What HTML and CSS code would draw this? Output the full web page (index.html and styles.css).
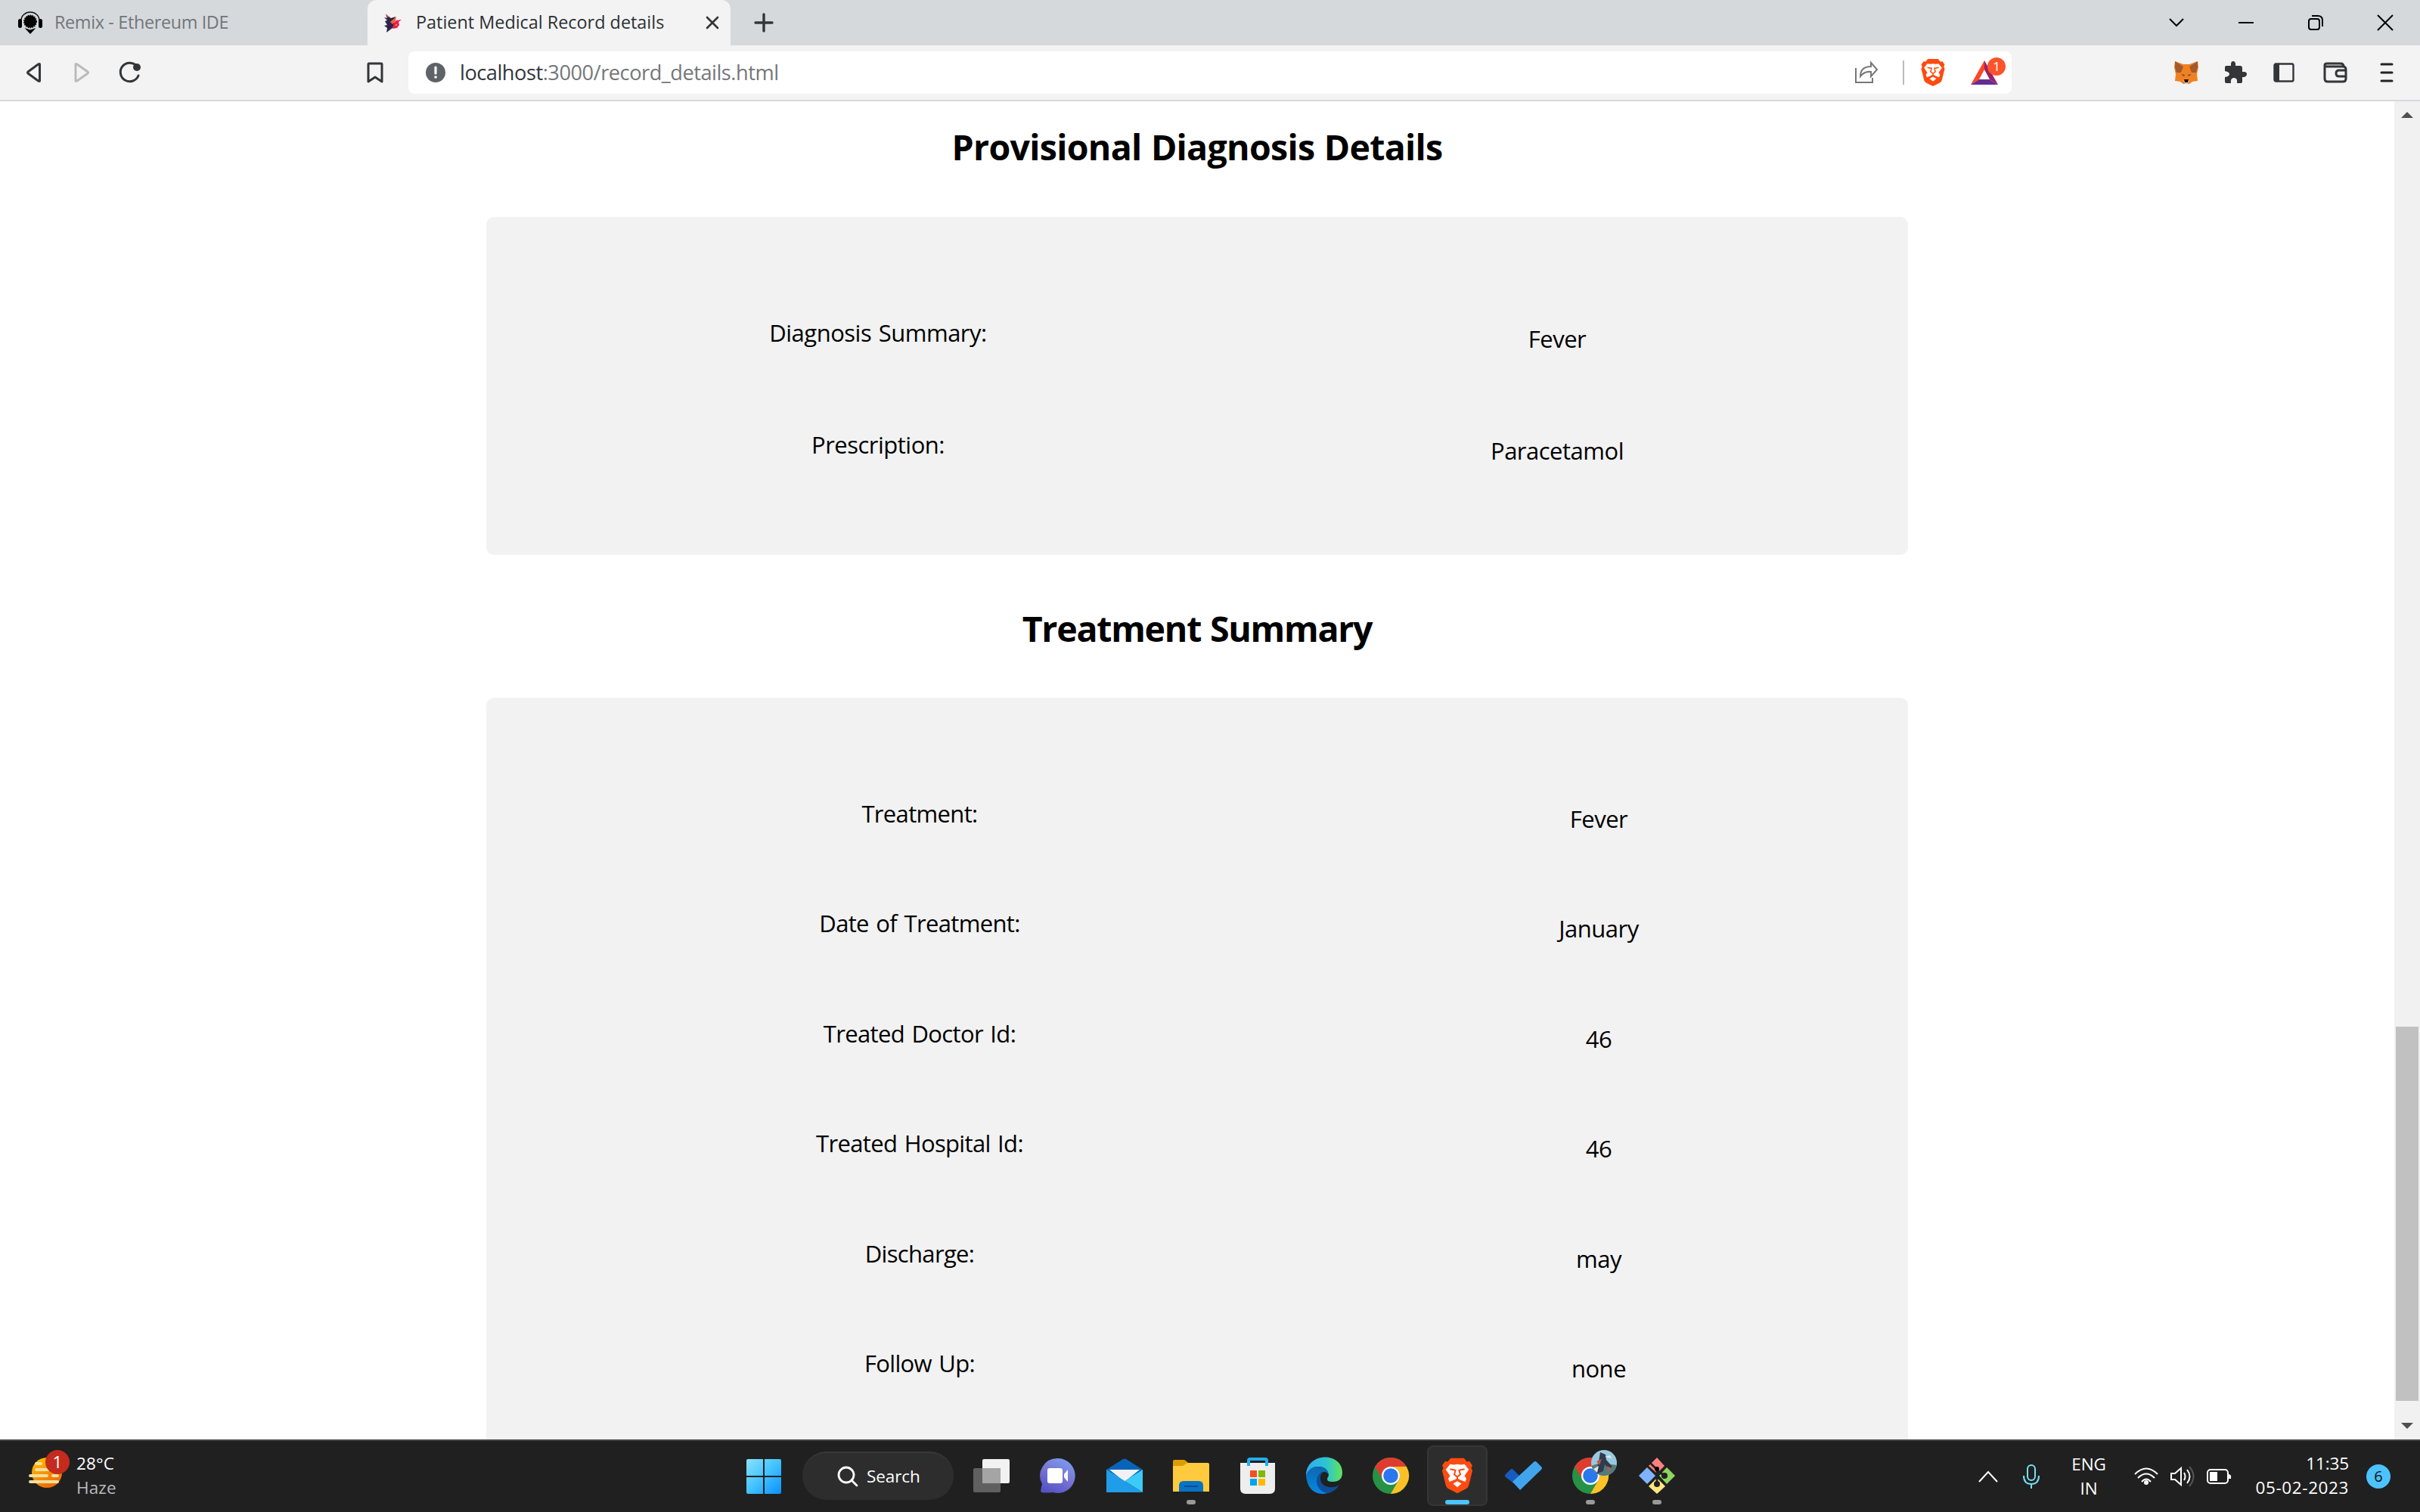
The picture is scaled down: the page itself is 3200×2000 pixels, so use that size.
FILE: index.html
```html
<!DOCTYPE html>
<html lang="en">
<head>
<meta charset="utf-8">
<title>Patient Medical Record details</title>
<link rel="stylesheet" href="styles.css">
</head>
<body>
<div class="screen">
  <header class="tabs">
    <div class="tab tab-idle">
      <svg class="remix" width="32" height="29" viewBox="0 0 32 29"><path d="M4 11a12 11 0 0 1 24 0" fill="none" stroke="#111" stroke-width="1.500"/><circle cx="16" cy="12.500" r="8.200" fill="#050505"/><circle cx="16" cy="12.500" r="8.400" fill="none" stroke="#050505" stroke-width="1.200" stroke-dasharray="1.500 1.500"/><rect y="9" width="5" height="12" rx="2.500"/><rect x="27" y="9" width="5" height="12" rx="2.500"/><path d="M8.500 21l7.500 2.500L23.500 21 16 29z"/></svg>
      <span class="tab-title">Remix - Ethereum IDE</span>
    </div>
    <div class="tab tab-active">
      <svg class="bird" width="25" height="25" viewBox="0 0 25 25"><path d="M3 1l7 5 6-2-3 6 3 5-4 4-8 6 1-6-4-3 4-1-3-5 3-1-4-4 4 1z" fill="#2d2548"/><path d="M3 0l6 5-4-1z" fill="#de735c"/><path d="M9 11l8-7-1 6-4 4z" fill="#e8683f"/><path d="M14 12l3-3 7-1-4 3 1 4-3 4-6 1 1-4z" fill="#f01f45"/><circle cx="17" cy="15" r="1" fill="#ff9fb0"/></svg>
      <span class="tab-title">Patient Medical Record details</span>
      <svg class="tab-close" width="18" height="18" viewBox="0 0 18 18"><path d="M2 2l14 14M16 2L2 16" stroke="#333" stroke-width="2.6" stroke-linecap="round"/></svg>
    </div>
    <svg class="tab-new" width="26" height="26" viewBox="0 0 26 26"><path d="M13 2v22M2 13h22" stroke="#333639" stroke-width="3.4" stroke-linecap="round"/></svg>
    <div class="window-buttons">
      <svg width="24" height="24" viewBox="0 0 24 24"><path d="M3 7l9 9 9-9"/></svg>
      <svg width="24" height="24" viewBox="0 0 24 24"><path d="M2 12h20"/></svg>
      <svg width="24" height="24" viewBox="0 0 24 24"><rect x="3" y="7" width="14" height="14" rx="3"/><path d="M7 3h8q6 0 6 6v8"/></svg>
      <svg width="24" height="24" viewBox="0 0 24 24"><path d="M2 2l20 20M22 2L2 22"/></svg>
    </div>
  </header>

  <nav class="toolbar">
    <svg class="nav-back" width="24" height="28" viewBox="0 0 24 28"><path d="M19.500 3v22q0 1-2 0L4 15q-1-1 0-2L17.500 3q2-1 2 0z"/></svg>
    <svg class="nav-forward" width="24" height="28" viewBox="0 0 24 28"><path d="M4 3v22q0 1 2 0l14-10q1-1 0-2L6 3Q4 2 4 3z"/></svg>
    <svg class="nav-reload" width="30" height="30" viewBox="0 0 30 30"><path d="M26 19A12.300 12.300 0 1 1 23 5.500" fill="none" stroke="#333639" stroke-width="3" stroke-linecap="round"/><circle cx="24" cy="8" r="5" fill="#333639"/></svg>
    <svg class="nav-bookmark" width="24" height="30" viewBox="0 0 24 30"><path d="M3 4q0-1 1-1h16q1 0 1 1v23l-9-6-9 6z" fill="none" stroke="#333639" stroke-width="3" stroke-linejoin="round"/></svg>
    <div class="address">
      <svg class="site-info" width="26" height="26" viewBox="0 0 26 26"><circle cx="13" cy="13" r="13" fill="#5f6368"/><path d="M13 6v8" stroke="#fff" stroke-width="3.200" stroke-linecap="round"/><circle cx="13" cy="19" r="1.800" fill="#fff"/></svg>
      <span class="url"><span class="host">localhost</span>:3000/record_details.html</span>
      <div class="address-actions">
        <svg width="32" height="30" viewBox="0 0 32 30"><path d="M2 9v19h22v-6M8 20q0-13 14-13V2l8 9-8 9v-6q-9-1-14 6z" fill="none" stroke="#777" stroke-width="2"/></svg>
        <i class="divider"></i>
        <svg class="brave-small" width="32" height="36" viewBox="0 0 50 58"><use href="#lion"/></svg>
        <div class="bat">
          <svg width="36" height="32" viewBox="0 0 36 32"><path d="M18 0L0 32l11-7 7-13z" fill="#ff4724"/><path d="M18 0l18 32-11-7-7-13z" fill="#9e1f63"/><path d="M0 32h36l-11-7H11z" fill="#662d91"/></svg>
          <b class="bat-count">1</b>
        </div>
      </div>
    </div>
    <div class="extensions">
      <svg class="ext-fox" width="32" height="30" viewBox="0 0 32 30"><path d="M1 0l11 4h8l11-4 1 8-2 9 1 9-7 1-4 3h-8l-4-3-7-1 1-9-2-9z" fill="#f08122"/><path d="M1 0l11 7-3 8H3L1 8zM31 0L20 7l3 8h6l2-7z" fill="#a3592b"/><path d="M9 17l5 1-1 2zM23 17l-5 1 1 2z" fill="#5c4a3a"/><path d="M12 25h8l-2 5h-4z" fill="#d8c4b5"/><path d="M13 24h6l-1 4h-4z" fill="#16100c"/></svg>
      <svg class="ext-puzzle" width="30" height="30" viewBox="0 0 30 30"><path d="M1 8q0-2 2-2h6V4q0-4 3-4t3 4v2h6q3 0 3 3v5h2q4 0 4 3t-4 4h-2v6q0 2-2 2h-5q1-7-4-7t-4 7H3q-2 0-2-2v-6q6-1 6-4t-6-4z" fill="#333639"/></svg>
      <svg class="ext-sidebar" width="28" height="26" viewBox="0 0 28 26"><rect x="1.500" y="1.500" width="25" height="23" rx="2" fill="none" stroke="#333639" stroke-width="2.400"/><path d="M1 2h7v22H1z" fill="#333639"/></svg>
      <svg class="ext-wallet" width="32" height="28" viewBox="0 0 32 28"><path d="M2 5v17q0 4 4 4h20q4 0 4-4V10q0-4-4-4H4Q2 6 2 4q0-2 3-2h18q4 0 4 4M30 11h-9q-4 0-4 4t4 4h9" fill="none" stroke="#333639" stroke-width="3"/></svg>
      <svg width="18" height="28" viewBox="0 0 18 28"><path d="M2 3h14M2 14h14M2 25h14" stroke="#222" stroke-width="3" stroke-linecap="round"/></svg>
    </div>
  </nav>

  <div class="viewport">
    <main class="page">
      <h2>Provisional Diagnosis Details</h2>
      <section class="card diagnosis">
        <div class="row"><label>Diagnosis Summary:</label><output>Fever</output></div>
        <div class="row"><label>Prescription:</label><output>Paracetamol</output></div>
      </section>
      <h2>Treatment Summary</h2>
      <section class="card treatment">
        <div class="row"><label>Treatment:</label><output>Fever</output></div>
        <div class="row"><label>Date of Treatment:</label><output>January</output></div>
        <div class="row"><label>Treated Doctor Id:</label><output>46</output></div>
        <div class="row"><label>Treated Hospital Id:</label><output>46</output></div>
        <div class="row"><label>Discharge:</label><output>may</output></div>
        <div class="row"><label>Follow Up:</label><output>none</output></div>
      </section>
    </main>
    <aside class="scrollbar">
      <svg width="16" height="8" viewBox="0 0 16 8"><path d="M0 8l8-8 8 8z" fill="#505050"/></svg>
      <i class="thumb"></i>
      <svg width="16" height="8" viewBox="0 0 16 8"><path d="M0 0l8 8 8-8z" fill="#505050"/></svg>
    </aside>
  </div>

  <footer class="taskbar">
    <div class="weather">
      <div class="weather-icon">
        <svg width="42" height="40" viewBox="0 0 42 40"><defs><linearGradient id="sun" x2="0.6" y2="1"><stop stop-color="#ffc800"/><stop offset="1" stop-color="#ef6a00"/></linearGradient></defs><circle cx="25" cy="20" r="20" fill="url(#sun)"/><path d="M11 8h6M11 16h16M3 24h22M33 24h6M3 32h36" stroke="#f5dda0" stroke-width="4" stroke-linecap="round"/></svg>
        <b class="weather-badge">1</b>
      </div>
      <div class="weather-text"><span>28°C</span><span class="dim">Haze</span></div>
    </div>

    <div class="apps">
      <div class="app"><svg width="46" height="46" viewBox="0 0 46 46"><defs><linearGradient id="win" gradientUnits="userSpaceOnUse" x1="0" y1="0" x2="46" y2="46"><stop stop-color="#8be3ff"/><stop offset=".5" stop-color="#42c2ff"/><stop offset="1" stop-color="#0a90ff"/></linearGradient></defs><path d="M2 0h20v22H0V2q0-2 2-2zM24 0h20q2 0 2 2v20H24zM0 24h22v22H2q-2 0-2-2zM24 24h22v20q0 2-2 2H24z" fill="url(#win)"/></svg></div>
      <div class="search"><svg width="28" height="28" viewBox="0 0 28 28"><circle cx="12" cy="12" r="10" fill="none" stroke="#fff" stroke-width="2.800"/><path d="M19 19l7 7" stroke="#fff" stroke-width="2.800" stroke-linecap="round"/></svg><span>Search</span></div>
      <div class="app"><svg width="48" height="44" viewBox="0 0 48 44"><rect x="12" width="36" height="32" rx="2" fill="#f2f2f2"/><rect y="12" width="36" height="32" rx="2" fill="#606060"/><path d="M12 12h24v20H12z" fill="#a5a5a5"/></svg></div>
      <div class="app"><svg width="46" height="46" viewBox="0 0 46 46"><defs><linearGradient id="chat" x1=".8" x2=".3" y2="1"><stop stop-color="#7c9df0"/><stop offset=".5" stop-color="#7876d2"/><stop offset="1" stop-color="#5553c5"/></linearGradient></defs><path d="M23 0a23 23 0 1 1-7 45Q8 46 1 45q-2-1 1-11A23 23 0 0 1 23 0z" fill="url(#chat)"/><rect x="9" y="13" width="20" height="20" rx="3" fill="#fff"/><path d="M31 21l5-6v16l-5-6z" fill="#fff"/></svg></div>
      <div class="app"><svg width="48" height="46" viewBox="0 0 48 46"><path d="M0 15L22 1q2-1 4 0l22 14-8 12H8z" fill="#0864b9"/><path d="M4 15h40L24 31z" fill="#f1f1f4"/><path d="M0 15l24 15L0 45z" fill="#24aaea"/><path d="M48 15L24 30l24 15z" fill="#3bcbf6"/><path d="M0 15l48 30H0z" fill="#1f9de8"/></svg></div>
      <div class="app running"><svg width="48" height="42" viewBox="0 0 48 42"><path d="M0 12V2q0-2 2-2h12q2 0 4 2l3 3h-1l-7 7z" fill="#dd9c00"/><path d="M0 8h13l6-4h27q2 0 2 2v36H0z" fill="#ffca3d"/><path d="M8 42V34q0-6 6-6h20q6 0 6 6v8z" fill="#0873c5"/><path d="M15 35h18" stroke="#074e91" stroke-width="2"/></svg></div>
      <div class="app"><svg width="46" height="48" viewBox="0 0 46 48"><path d="M0 7h46v34q0 7-7 7H7q-7 0-7-7z" fill="#eee"/><path d="M11 11V4q0-2 2-2h20q2 0 2 2v7" fill="none" stroke="#1fb0f0" stroke-width="4"/><path d="M13 17h9v9h-9z" fill="#f25022"/><path d="M24 17h9v9h-9z" fill="#7fba00"/><path d="M13 28h9v9h-9z" fill="#00a4ef"/><path d="M24 28h9v9h-9z" fill="#ffb900"/></svg></div>
      <div class="app"><svg width="48" height="48" viewBox="0 0 48 48"><defs><linearGradient id="edge" x2="1"><stop stop-color="#31aaf4"/><stop offset=".55" stop-color="#2cc4d2"/><stop offset="1" stop-color="#62e35a"/></linearGradient><linearGradient id="edgeb" x2="0" y2="1"><stop stop-color="#0b68b0"/><stop offset="1" stop-color="#0789e2"/></linearGradient></defs><path d="M0 24C0-8 48-8 48 20q0 12-13 12-7 0-7-3t2-5q-1-12-14-12Q5 12 0 24z" fill="url(#edge)"/><path d="M0 24Q4 12 15 12q13 0 15 11-3-5-8-4-5 2-4 10 3 13 18 12-4 7-14 7Q2 47 0 24z" fill="url(#edgeb)"/><path d="M20 19q-7 6-6 14 3 13 15 14 10-2 15-11-5 4-14 3-12-2-11-14 1-5 5-6z" fill="#0e4e98"/></svg></div>
      <div class="app"><svg width="48" height="48" viewBox="0 0 48 48"><g id="chrome"><circle cx="24" cy="24" r="24" fill="#269246"/><path d="M3.200 12A24 24 0 0 1 44.800 12H24a12 12 0 0 0-10 18z" fill="#df3c30"/><path d="M44.800 12A24 24 0 0 1 24 48l10.400-18A12 12 0 0 0 24 12z" fill="#fdc127"/><circle cx="24" cy="24" r="12" fill="#fff"/><circle cx="24" cy="24" r="9.800" fill="#2b78ed"/></g></svg></div>
      <div class="app selected"><svg width="40" height="48" viewBox="0 0 50 58"><g id="lion"><path d="M14 0h22l5 6 4-1 5 7-2 4 2 5-6 24q-1 4-5 6L25 58 11 51q-4-2-5-6L0 21l2-5-2-4 5-7 4 1z" fill="#ff4b10"/><path d="M13 10l6 1 6-1 6 1 6-1 7 9-7 10 3 5-2 5-8-3-5-3-5 3-8 3-2-5 3-5-7-10zM25 38l7 4-7 6-7-6z" fill="#fff"/><path d="M13 18l9 2-2 7 5 4 5-4-2-7 9-2M25 30v6" fill="none" stroke="#ff4b10" stroke-width="2.500"/></g></svg></div>
      <div class="app"><svg width="50" height="40" viewBox="0 0 50 40"><path d="M1 18l6-6q2-2 4 0l15 15-8 8L1 22q-2-2 0-4z" fill="#185abd"/><path d="M10 28L38 2q2-2 4 0l6 6q2 2 0 4L20 39z" fill="#41a5ee"/></svg></div>
      <div class="app running">
        <svg width="48" height="48" viewBox="0 0 48 48"><use href="#chrome"/></svg>
        <svg class="avatar" width="34" height="34" viewBox="0 0 34 34"><defs><clipPath id="face"><circle cx="17" cy="17" r="17"/></clipPath></defs><g clip-path="url(#face)"><path d="M0 0h34v34H0z" fill="#9ac9df"/><path d="M0 21l12-4 22 3v14H0z" fill="#547b7c"/><path d="M12 3l7 3 1 7 8 9-5 3-5-6-2 9-10 4 4-17z" fill="#303b51"/><path d="M7 15l7-3-3 8zM21 21l5 3-3 5z" fill="#bc5c3b"/><path d="M3 25l7-4-2 9zM18 9l7-2 2 4z" fill="#dfe9e8"/></g></svg>
      </div>
      <div class="app running"><svg width="48" height="48" viewBox="0 0 48 48"><path d="M24 0l10 11-10 10-11-10z" fill="#ff8080"/><path d="M37 13l11 11-11 11-10-11z" fill="#8ed660"/><path d="M11 13l11 11-11 11L0 24z" fill="#80b3ff"/><path d="M24 27l11 11-11 10-11-10z" fill="#ffe680"/><path d="M15 7l9 9v20M24 17l10 7" fill="none" stroke="#202020" stroke-width="2.800"/><circle cx="24" cy="15" r="3"/><circle cx="24" cy="35" r="4" fill="#202020"/><circle cx="34" cy="24" r="4" fill="#202020"/></svg></div>
    </div>

    <div class="tray">
      <svg class="tray-up" width="26" height="16" viewBox="0 0 26 16"><path d="M1 15L13 2l12 13"/></svg>
      <svg class="tray-mic" width="22" height="32" viewBox="0 0 22 32"><rect x="6" y="1" width="10" height="20" rx="5"/><path d="M1 15q0 11 10 11t10-11M11 26v6"/></svg>
      <div class="language"><span>ENG</span><span>IN</span></div>
      <svg class="tray-wifi" width="32" height="24" viewBox="0 0 32 24"><path d="M1 9Q16-6 31 9M5 14q11-11 22 0M10 19q6-7 12 0"/><circle cx="16" cy="20" r="3" fill="#fff" stroke="none"/></svg>
      <svg class="tray-sound" width="32" height="28" viewBox="0 0 32 28"><path d="M1 10v8h5l8 7V3l-8 7zM18 9q3 5 0 10M22 5q7 9 0 18"/><path d="M25 1q11 13 0 26" stroke="#555"/></svg>
      <svg class="tray-battery" width="32" height="22" viewBox="0 0 32 22"><rect x="1" y="2" width="27" height="18" rx="4"/><path d="M4 5h10v12H4zM29 8q4 0 3 6h-3z" fill="#fff" stroke="none"/></svg>
      <div class="clock"><span>11:35</span><span class="date">05-02-2023</span></div>
      <b class="notifications">6</b>
    </div>
  </footer>
</div>
</body>
</html>
```
FILE: styles.css
```css
* { box-sizing: border-box; }
body { margin: 0; overflow: hidden; font-family: "Open Sans", "Noto Sans", sans-serif; background: #fff; }
svg { display: block; flex: none; overflow: visible; }
.screen { width: 3200px; height: 2000px; display: flex; flex-direction: column; }

.tabs { height: 60px; flex: none; display: flex; align-items: center; background: #d5d9dc; }
.tab { height: 60px; display: flex; align-items: center; font-size: 23.4px; letter-spacing: -0.35px; white-space: nowrap; }
.tab-title { margin-top: -2px; }
.tab-idle { width: 486px; padding-left: 24px; gap: 16px; color: #72767a; }
.tab-active { width: 480px; padding: 0 15px 0 21px; gap: 18px; background: #f3f3f3; border-radius: 12px 12px 0 0; color: #2d3033; letter-spacing: 0; }
.tab-close { margin-left: auto; }
.tab-new { margin-left: 31px; }
.window-buttons { margin-left: auto; padding-right: 34px; display: flex; gap: 68px; fill: none; stroke: #000; stroke-width: 2; }

.toolbar { height: 74px; flex: none; display: flex; align-items: center; background: #f3f3f3; border-bottom: 2px solid #d5d9dc; }
.nav-back { margin-left: 33px; fill: none; stroke: #333639; stroke-width: 3; }
.nav-forward { margin-left: 39px; fill: none; stroke: #bbb; stroke-width: 3; }
.nav-reload { margin-left: 37px; }
.nav-bookmark { margin-left: 297px; }
.address { width: 2120px; height: 56px; margin-left: 32px; padding: 0 10px 0 23px; display: flex; align-items: center; background: #fff; border-radius: 8px; }
.url { margin: -2px 0 0 19px; font-size: 27.2px; letter-spacing: -0.47px; color: #74777a; }
.host { color: #333639; }
.address-actions { margin-left: auto; display: flex; align-items: center; }
.divider { width: 2px; height: 32px; margin: 0 22px 0 32px; background: #bbb; }
.bat { position: relative; margin: 0 8px 0 34px; }
.bat-count { position: absolute; left: 22px; top: -4px; width: 24px; height: 24px; border-radius: 50%; background: #fb542b; color: #fff; font: 17px/24px "Open Sans", sans-serif; text-align: center; }
.extensions { margin-left: auto; padding-right: 35px; display: flex; align-items: center; }
.ext-fox { margin-right: 34px; }
.ext-puzzle { margin-right: 35px; }
.ext-sidebar { margin-right: 38px; }
.ext-wallet { margin-right: 43px; }

.viewport { flex: 1; min-height: 0; display: flex; overflow: hidden; }
.page { flex: 1; display: flex; flex-direction: column; align-items: center; overflow: hidden; }
h2 { margin: 0; height: 153px; flex: none; padding-top: 28px; font-size: 46.500px; line-height: 64px; letter-spacing: -0.7px; word-spacing: 1px; }
h2 + .card + h2 { height: 189px; padding-top: 65px; letter-spacing: -1.25px; }
.card { width: 1880px; flex: none; background: #f2f2f2; border-radius: 10px; font-size: 31px; line-height: 44px; letter-spacing: -0.5px; word-spacing: 2px; color: #000; }
.diagnosis { height: 447px; padding: 131px 0 0 69px; }
.treatment { height: 1100px; padding: 131px 0 0 124px; }
.row { display: flex; text-align: center; height: 148px; }
.treatment .row { height: 145.400px; }
.row label, .row output { width: 898px; flex: none; }
.row output { padding-top: 8px; }
.treatment label { letter-spacing: -0.65px; }
.treatment output { padding-top: 7px; }
.scrollbar { width: 34px; display: flex; flex-direction: column; align-items: center; padding: 14px 2px 14px; background: #f1f1f1; }
.thumb { width: 30px; height: 495px; margin-top: auto; margin-bottom: 29px; background: #c1c1c1; }

.taskbar { height: 96px; flex: none; display: flex; background: #202020; border-top: 2px solid #444; color: #fff; font-size: 22.500px; line-height: 32px; letter-spacing: -0.1px; }
.weather { width: 984px; display: flex; padding: 14px 0 0 37px; }
.weather-icon { position: relative; width: 64px; padding-top: 8px; }
.weather-badge { position: absolute; left: 23px; top: -2px; width: 32px; height: 32px; border-radius: 50%; background: #c42b1c; text-align: center; font-weight: 400; }
.weather-text, .language, .clock { display: flex; flex-direction: column; }
.weather-text { letter-spacing: 0.1px; }
.dim { color: #bbb; }
.apps { display: flex; align-items: center; padding-bottom: 2px; }
.app { position: relative; width: 80px; height: 80px; margin-right: 8px; display: flex; align-items: center; justify-content: center; }
.apps > .app:first-child { width: 52px; margin-right: 25px; padding-top: 2px; }
.search { width: 200px; height: 64px; margin-right: 10px; border-radius: 32px; background: #2d2d2d; border-top: 2px solid #393939; display: flex; align-items: center; padding-left: 46px; gap: 11px; }
.selected { background: #2d2d2d; border-radius: 8px; border: 2px solid #363636; }
.selected::after, .running::after { content: ""; position: absolute; bottom: 2px; width: 12px; height: 6px; border-radius: 3px; background: #999; }
.selected::after { width: 32px; bottom: 0; background: #4cc2ff; }
.avatar { position: absolute; left: 41px; top: 6px; }
.tray { margin-left: auto; padding-right: 39px; display: flex; align-items: center; fill: none; stroke: #fff; stroke-width: 2; }
.tray-mic { margin-left: 33px; stroke: #76dff5; }
.language { width: 64px; margin-left: 33px; text-align: center; }
.tray-wifi { margin-left: 28px; }
.tray-sound { margin-left: 16px; }
.tray-battery { margin-left: 16px; }
.clock { width: 132px; margin-left: 24px; margin-top: -3px; text-align: right; }
.date { letter-spacing: 0.6px; }
.notifications { width: 32px; height: 32px; margin-left: 23px; border-radius: 50%; background: #4cc2ff; color: #111; text-align: center; font-weight: 400; font-size: 20px; }
```
